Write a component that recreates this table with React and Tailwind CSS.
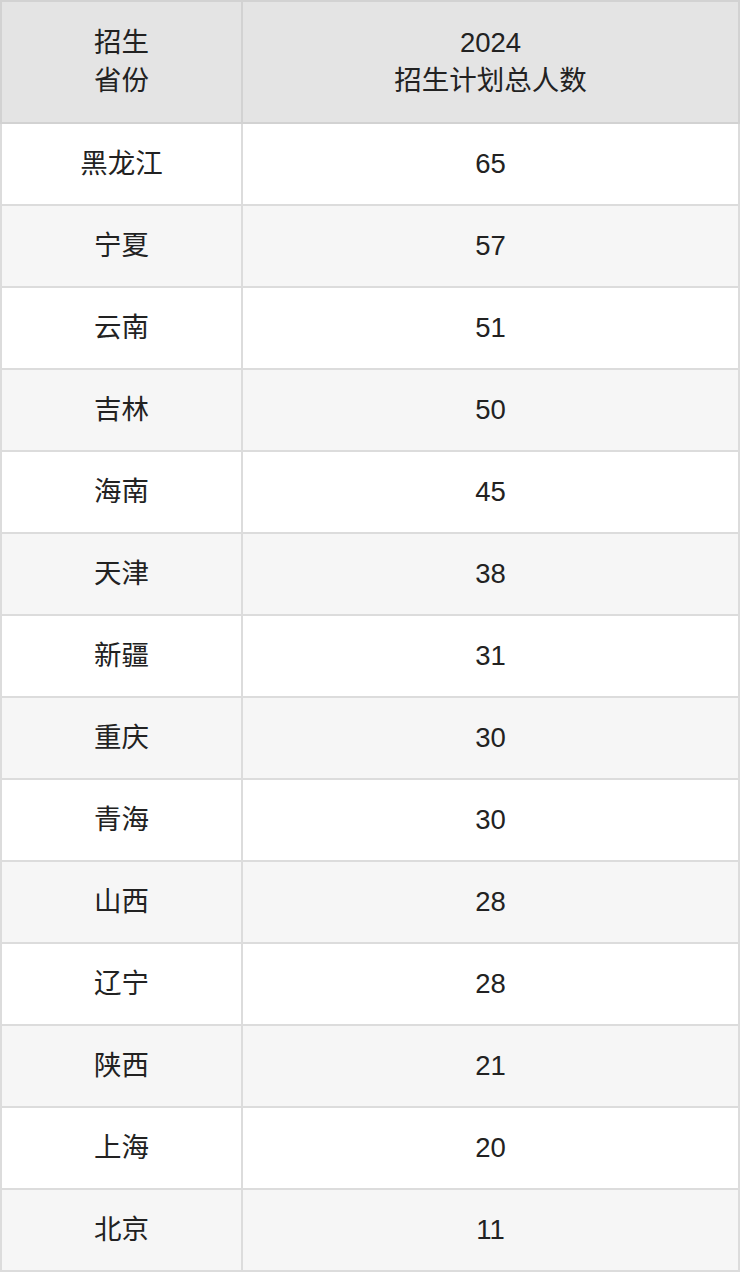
import React from "react";

const rows = [
  ["黑龙江", 65],
  ["宁夏", 57],
  ["云南", 51],
  ["吉林", 50],
  ["海南", 45],
  ["天津", 38],
  ["新疆", 31],
  ["重庆", 30],
  ["青海", 30],
  ["山西", 28],
  ["辽宁", 28],
  ["陕西", 21],
  ["上海", 20],
  ["北京", 11],
];

const App = () => {
  return (
    <div
      className="w-[740px] bg-white text-[#222] text-[27.5px]"
      style={{ fontFamily: '"Liberation Sans", "Noto Sans CJK SC", sans-serif' }}
    >
      <table className="w-full border-collapse table-fixed">
        <colgroup>
          <col className="w-[241px]" />
          <col />
        </colgroup>
        <thead>
          <tr className="h-[122px] bg-[#e4e4e4]">
            <th className="border-2 border-[#d2d2d2] font-normal leading-[38px] text-center">
              招生
              <br />
              省份
            </th>
            <th className="border-2 border-[#d2d2d2] font-normal leading-[38px] text-center">
              2024
              <br />
              招生计划总人数
            </th>
          </tr>
        </thead>
        <tbody>
          {rows.map((item, id) => (
            <tr
              key={`${id}.row`}
              className={`h-[82px] ${id % 2 === 1 ? "bg-[#f6f6f6]" : "bg-white"}`}
            >
              <td className="border-2 border-[#dcdcdc] text-center">{item[0]}</td>
              <td className="border-2 border-[#dcdcdc] text-center">{item[1]}</td>
            </tr>
          ))}
        </tbody>
      </table>
    </div>
  );
};

export default App;
